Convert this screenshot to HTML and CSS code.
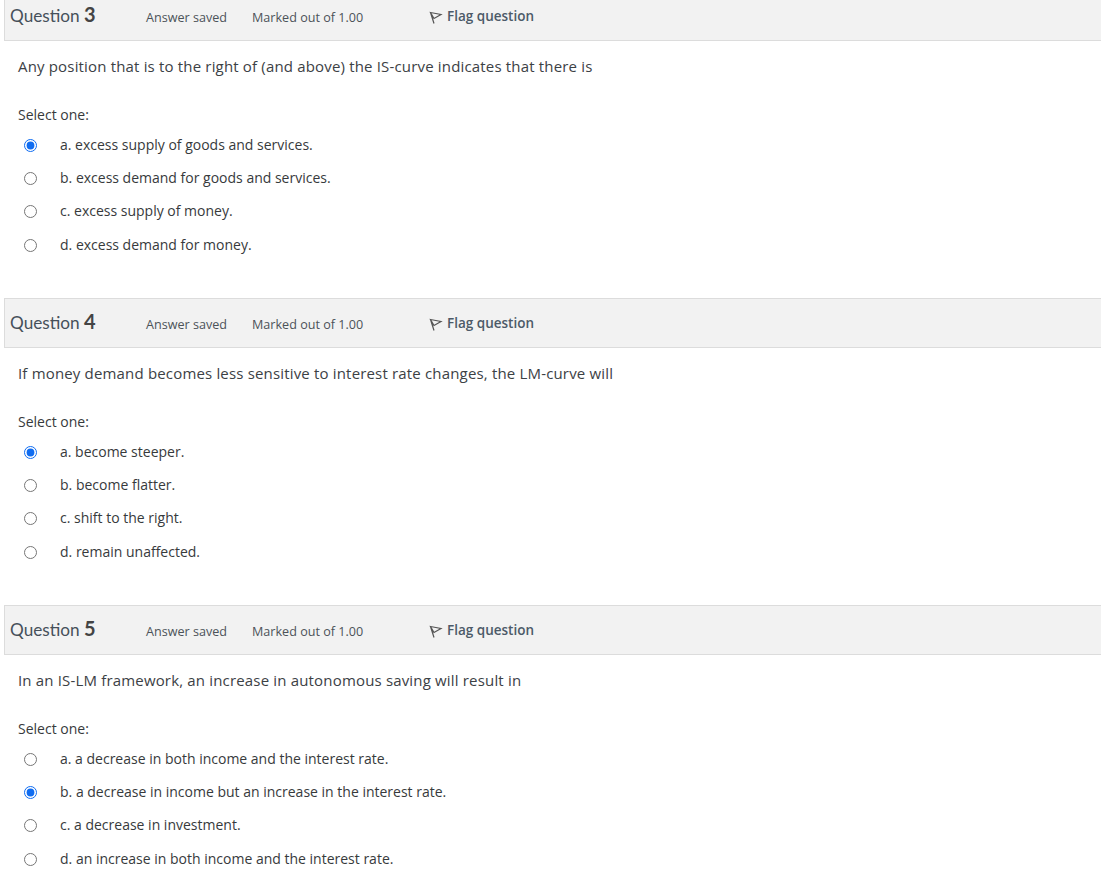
FILE: index.html
```html
<!DOCTYPE html>
<html lang="en">
<head>
    <meta charset="UTF-8">
    <meta name="viewport" content="width=device-width, initial-scale=1.0">
    <title>Quiz attempt</title>
    <link rel="stylesheet" href="styles.css">
</head>
<body>

    <div class="quiz">

        <!-- Question 3 -->
        <div class="question">
            <div class="info">
                <h3 class="qno">Question <span>3</span></h3>
                <div class="state">Answer saved</div>
                <div class="grade">Marked out of 1.00</div>
                <div class="flag">
                    <svg class="flag-icon" viewBox="0 0 14 14"><path d="M1.5 1.5 L12 3.5 L5 7.5 Z M1.5 1.5 L5 12.5"/></svg>
                    Flag question
                </div>
            </div>
            <p class="qtext">Any position that is to the right of (and above) the IS-curve indicates that there is</p>
            <p class="prompt">Select one:</p>
            <div class="answer">
                <label class="option"><input type="radio" name="q3" checked><span>a. excess supply of goods and services.</span></label>
                <label class="option"><input type="radio" name="q3"><span>b. excess demand for goods and services.</span></label>
                <label class="option"><input type="radio" name="q3"><span>c. excess supply of money.</span></label>
                <label class="option"><input type="radio" name="q3"><span>d. excess demand for money.</span></label>
            </div>
        </div>

        <!-- Question 4 -->
        <div class="question">
            <div class="info">
                <h3 class="qno">Question <span>4</span></h3>
                <div class="state">Answer saved</div>
                <div class="grade">Marked out of 1.00</div>
                <div class="flag">
                    <svg class="flag-icon" viewBox="0 0 14 14"><path d="M1.5 1.5 L12 3.5 L5 7.5 Z M1.5 1.5 L5 12.5"/></svg>
                    Flag question
                </div>
            </div>
            <p class="qtext">If money demand becomes less sensitive to interest rate changes, the LM-curve will</p>
            <p class="prompt">Select one:</p>
            <div class="answer">
                <label class="option"><input type="radio" name="q4" checked><span>a. become steeper.</span></label>
                <label class="option"><input type="radio" name="q4"><span>b. become flatter.</span></label>
                <label class="option"><input type="radio" name="q4"><span>c. shift to the right.</span></label>
                <label class="option"><input type="radio" name="q4"><span>d. remain unaffected.</span></label>
            </div>
        </div>

        <!-- Question 5 -->
        <div class="question">
            <div class="info">
                <h3 class="qno">Question <span>5</span></h3>
                <div class="state">Answer saved</div>
                <div class="grade">Marked out of 1.00</div>
                <div class="flag">
                    <svg class="flag-icon" viewBox="0 0 14 14"><path d="M1.5 1.5 L12 3.5 L5 7.5 Z M1.5 1.5 L5 12.5"/></svg>
                    Flag question
                </div>
            </div>
            <p class="qtext">In an IS-LM framework, an increase in autonomous saving will result in</p>
            <p class="prompt">Select one:</p>
            <div class="answer">
                <label class="option"><input type="radio" name="q5"><span>a. a decrease in both income and the interest rate.</span></label>
                <label class="option"><input type="radio" name="q5" checked><span>b. a decrease in income but an increase in the interest rate.</span></label>
                <label class="option"><input type="radio" name="q5"><span>c. a decrease in investment.</span></label>
                <label class="option"><input type="radio" name="q5"><span>d. an increase in both income and the interest rate.</span></label>
            </div>
        </div>

    </div>

</body>
</html>
```

FILE: styles.css
```css
html, body {
    margin: 0;
    padding: 0;
    height: 878px;
    overflow: hidden;
    background-color: #fff;
}
body {
    font-family: "Open Sans", Arial, sans-serif;
    color: #373a3c;
}
.quiz {
    margin-top: -9px;
    padding-left: 4px;
}
.question {
    height: 307px;
}
.info {
    display: flex;
    align-items: center;
    height: 48px;
    background-color: #f2f2f2;
    border: 1px solid #dcdcdc;
    border-right: none;
    padding-left: 5px;
}
.qno {
    width: 136px;
    margin: 0 0 4px;
    font-family: "Lato", Arial, sans-serif;
    font-size: 17.2px;
    font-weight: 400;
    color: #46505a;
}
.qno span {
    font-size: 20px;
    font-weight: 700;
    color: #444;
}
.state {
    width: 106px;
    margin-top: 2px;
    font-size: 12.6px;
    color: #4c5359;
}
.grade {
    width: 177px;
    margin-top: 2px;
    font-size: 12.6px;
    color: #4c5359;
}
.flag {
    display: flex;
    align-items: center;
    font-size: 13.5px;
    font-weight: 600;
    color: #4c5a68;
}
.flag-icon {
    width: 14px;
    height: 14px;
    margin-right: 4px;
    margin-top: 3px;
    fill: none;
    stroke: #555;
    stroke-width: 1.2;
}
.qtext {
    margin: 15px 0 0 14px;
    font-size: 15px;
    line-height: 20px;
    letter-spacing: 0.17px;
    color: #3c4145;
}
.prompt {
    margin: 30px 0 0 14px;
    font-size: 14px;
    line-height: 18px;
}
.answer {
    margin-top: 3.6px;
}
.option {
    display: flex;
    align-items: center;
    height: 33.33px;
    font-size: 14px;
}
.option input {
    width: 13px;
    height: 13px;
    margin: 2px 23px 0 20px;
    accent-color: #0f6cf1;
}
```
